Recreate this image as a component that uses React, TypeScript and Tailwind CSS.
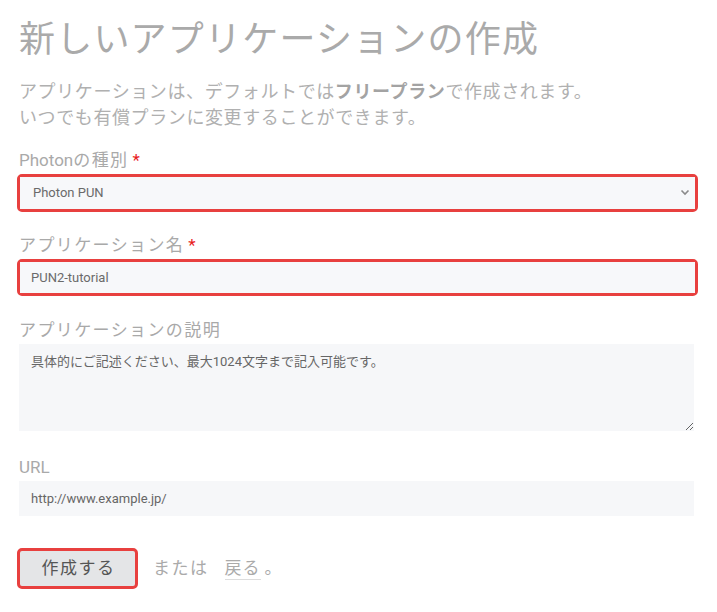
import React from 'react';

const font = { fontFamily: 'Roboto, "Noto Sans CJK JP", sans-serif' };

function Label({ latin, text, required }: { latin?: string; text?: string; required?: boolean }) {
  return (
    <div className="text-[17px] leading-[24px] text-[#a9a9a9] mb-[2px]">
      {latin}
      {text && <span className="tracking-[1.4px]">{text}</span>}
      {required && <span className="text-[#e8201c] ml-[4px]">*</span>}
    </div>
  );
}

export default function App() {
  return (
    <div className="bg-white min-h-[612px] pl-[19px] pr-[23px] pt-[18px]" style={font}>
      <h1 className="text-[36px] leading-[44px] text-[#aaaaaa] font-normal tracking-[1.2px]">
        新しいアプリケーションの作成
      </h1>
      <p className="mt-[17px] text-[18px] leading-[26px] text-[#b0b0b0] tracking-[0.6px]">
        アプリケーションは、デフォルトでは<span className="font-bold text-[#a3a3a3]">フリープラン</span>で作成されます。
        <br />
        いつでも有償プランに変更することができます。
      </p>

      <form className="mt-[17px]" onSubmit={(e) => e.preventDefault()}>
        <Label latin="Photon" text="の種別" required />
        <div className="-ml-[2px] -mr-[4px] border-[3px] border-[#e8403f] rounded-[5px] relative">
          <select
            className="appearance-none w-full h-[32px] bg-[#f7f8fa] pl-[13px] text-[13px] text-[#6a6a6a] outline-none"
            defaultValue="pun"
          >
            <option value="pun">Photon PUN</option>
          </select>
          <svg
            className="absolute right-[5px] top-[12px] pointer-events-none"
            width="10"
            height="7"
            viewBox="0 0 10 7"
            fill="none"
          >
            <path d="M1.5 1.5 L5 5 L8.5 1.5" stroke="#8a8a8a" strokeWidth="1.6" />
          </svg>
        </div>

        <div className="mt-[21px]">
          <Label text="アプリケーション名" required />
          <div className="-ml-[2px] -mr-[4px] border-[3px] border-[#e8403f] rounded-[5px]">
            <input
              className="w-full h-[31px] bg-[#f7f8fa] pl-[11px] text-[13px] text-[#6a6a6a] outline-none"
              defaultValue="PUN2-tutorial"
            />
          </div>
        </div>

        <div className="mt-[22px]">
          <Label text="アプリケーションの説明" />
          <textarea
            className="block w-full h-[87px] bg-[#f6f7f9] px-[12px] py-[8px] text-[13px] leading-[20px] text-[#666] placeholder:text-[#666] outline-none"
            placeholder="具体的にご記述ください、最大1024文字まで記入可能です。"
          />
        </div>

        <div className="mt-[24px]">
          <Label latin="URL" />
          <input
            className="block w-full h-[35px] bg-[#f6f7f9] px-[12px] text-[13px] text-[#666] placeholder:text-[#666] outline-none"
            placeholder="http://www.example.jp/"
          />
        </div>

        <div className="mt-[32px] flex items-center -ml-[2px]">
          <button
            type="submit"
            className="w-[121px] h-[41px] border-[3px] border-[#e8403f] rounded-[5px] bg-[#e4e5e7] text-[17px] text-[#555] tracking-[1.5px] pl-[2px]"
          >
            作成する
          </button>
          <span className="ml-[15px] text-[17px] text-[#aaaaaa] tracking-[1.5px]">または</span>
          <a href="#" className="ml-[16px] text-[17px] text-[#aaaaaa] border-b border-[#dddddd] leading-[22px] tracking-[1px]">
            戻る
          </a>
          <span className="ml-[4px] text-[17px] text-[#aaaaaa]">。</span>
        </div>
      </form>
    </div>
  );
}
